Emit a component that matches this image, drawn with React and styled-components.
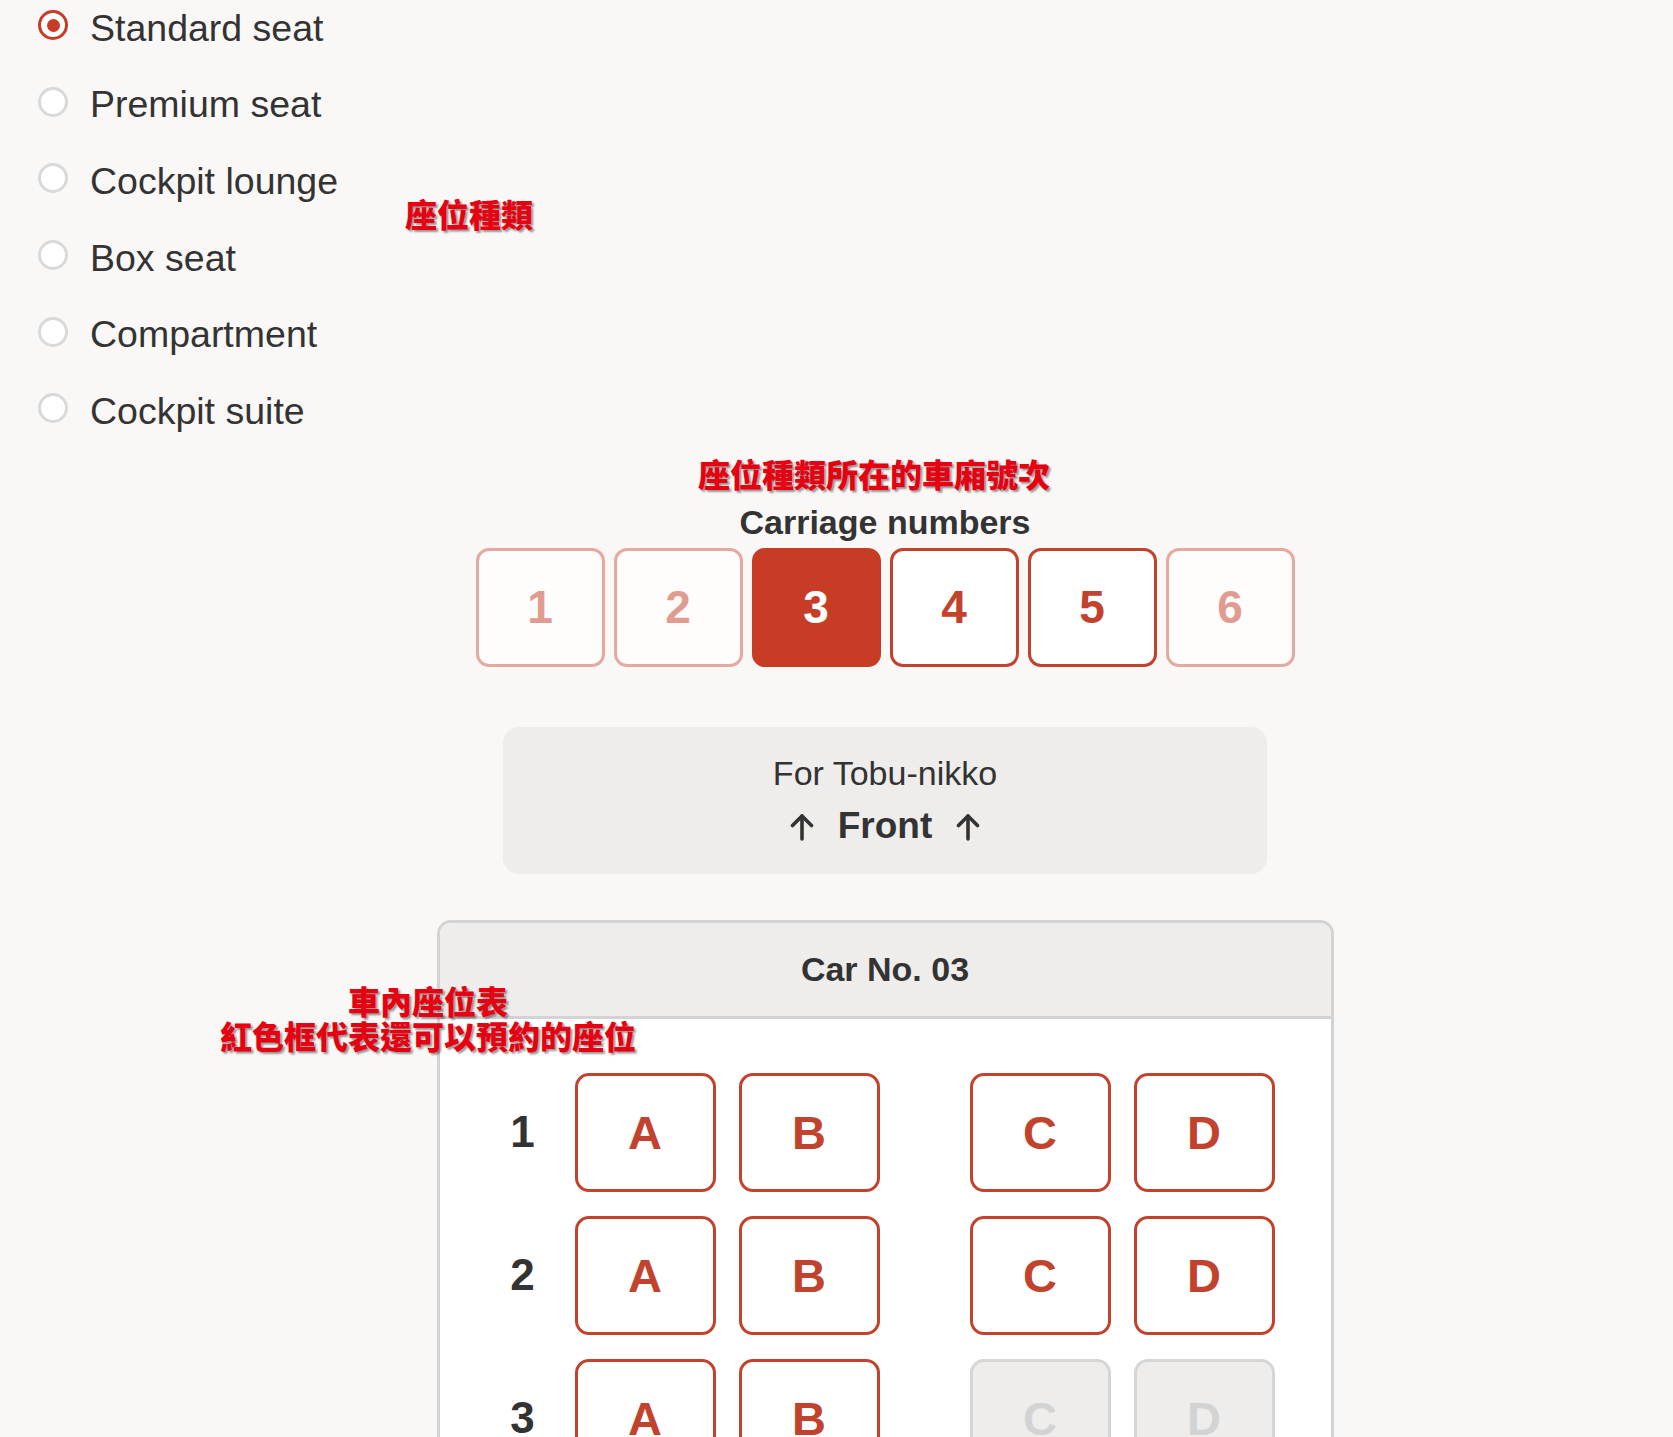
import React, { useState } from "react";
import styled, { createGlobalStyle, css } from "styled-components";

const GlobalStyle = createGlobalStyle`
  * { box-sizing: border-box; }
  html, body {
    margin: 0;
    padding: 0;
    background: #faf8f7;
  }
  body {
    font-family: "Liberation Sans", Arial, sans-serif;
    color: #333;
    overflow: hidden;
  }
`;

const Page = styled.div`
  position: relative;
  width: 1673px;
  min-height: 1437px;
  overflow: hidden;
`;

// seat type radios
const SeatTypeList = styled.ul`
  list-style: none;
  margin: -13px 0 0;
  padding: 0 0 0 38px;
`;

const SeatTypeRow = styled.li`
  height: 76.6px;
  display: flex;
  align-items: center;
  gap: 22px;
  font-size: 37.5px;
  color: #333;
  cursor: pointer;
`;

const SeatTypeLabel = styled.span`
  padding-top: 6px;
`;

const RadioDot = styled.span`
  flex: none;
  width: 30px;
  height: 30px;
  border-radius: 50%;
  border: 3px solid ${(p) => (p.$checked ? "#c63c24" : "#d9d9d9")};
  background: #fff;
  display: flex;
  align-items: center;
  justify-content: center;

  &::after {
    content: "";
    width: 13px;
    height: 13px;
    border-radius: 50%;
    background: ${(p) => (p.$checked ? "#c63c24" : "transparent")};
  }
`;

const Main = styled.main`
  display: flex;
  flex-direction: column;
  align-items: center;
  margin-left: 97px;
  padding-top: 55px;
  padding-bottom: 120px;
`;

const SectionTitle = styled.h2`
  margin: 0;
  font-size: 34px;
  line-height: 40px;
  font-weight: 700;
  color: #333;
`;

const CarriageList = styled.div`
  display: flex;
  gap: 9px;
  margin-top: 6px;
`;

const carriageStates = {
  active: css`
    background: #c63c24;
    border-color: #c63c24;
    color: #fff;
  `,
  open: css`
    background: #fff;
    border-color: #c1432d;
    color: #c1432d;
  `,
  closed: css`
    background: #fffdfc;
    border-color: #e4aaa0;
    color: #e09c90;
  `,
};

const CarriageButton = styled.button`
  width: 129px;
  height: 119px;
  border: 3px solid;
  border-radius: 13px;
  font-family: "Liberation Sans", Arial, sans-serif;
  font-size: 46px;
  font-weight: 700;
  padding: 0;
  cursor: pointer;
  ${(p) => carriageStates[p.$state]}
`;

const DirectionBox = styled.div`
  margin-top: 60px;
  width: 764px;
  height: 147px;
  border-radius: 16px;
  background: #efedeb;
  display: flex;
  flex-direction: column;
  align-items: center;
  justify-content: center;
`;

const Destination = styled.div`
  font-size: 34px;
  line-height: 40px;
  color: #333;
`;

const FrontLabel = styled.div`
  margin-top: 11px;
  display: flex;
  align-items: center;
  gap: 24px;
  font-size: 37px;
  line-height: 44px;
  font-weight: 700;
  color: #333;

  svg {
    display: block;
    margin-top: 2px;
  }
`;

const CarPanel = styled.section`
  margin-top: 46px;
  width: 897px;
  border: 3px solid #d3d3d3;
  border-bottom: none;
  border-radius: 14px 14px 0 0;
  background: #fff;
  overflow: hidden;
`;

const CarHeader = styled.header`
  height: 96px;
  background: #efedeb;
  border-bottom: 3px solid #d3d3d3;
  display: flex;
  align-items: center;
  justify-content: center;
  font-size: 34px;
  font-weight: 700;
  color: #333;
`;

const SeatMap = styled.div`
  display: flex;
  flex-direction: column;
  gap: 24px;
  padding: 54px 0 60px 55px;
`;

const SeatRow = styled.div`
  display: flex;
  align-items: center;
`;

const RowLabel = styled.div`
  width: 56px;
  margin-right: 24px;
  text-align: center;
  font-size: 44px;
  font-weight: 700;
  color: #333;
`;

const SeatPair = styled.div`
  display: flex;
  gap: 23px;

  & + & {
    margin-left: 90px;
  }
`;

const Seat = styled.button`
  width: 141px;
  height: 119px;
  border: 3px solid ${(p) => (p.$taken ? "#d6d6d6" : "#c1432d")};
  border-radius: 14px;
  background: ${(p) => (p.$taken ? "#efedeb" : "#fff")};
  color: ${(p) => (p.$taken ? "#d3d3d3" : "#c1432d")};
  font-family: "Liberation Sans", Arial, sans-serif;
  font-size: 47px;
  font-weight: 700;
  padding: 0;
  cursor: ${(p) => (p.$taken ? "default" : "pointer")};
`;

// red blog annotations laid over the screenshot
const Note = styled.div`
  position: absolute;
  font-family: "Noto Sans CJK TC", "Noto Sans CJK SC", sans-serif;
  font-weight: 900;
  font-size: 32px;
  line-height: 35px;
  color: #e60012;
  text-shadow: 2px 2px 2px rgba(0, 0, 0, 0.4);
  white-space: nowrap;
  text-align: center;
`;

const seatTypes = [
  "Standard seat",
  "Premium seat",
  "Cockpit lounge",
  "Box seat",
  "Compartment",
  "Cockpit suite",
];

const carriages = [
  { no: 1, state: "closed" },
  { no: 2, state: "closed" },
  { no: 3, state: "open" },
  { no: 4, state: "open" },
  { no: 5, state: "open" },
  { no: 6, state: "closed" },
];

const rows = [
  { no: 1, taken: [] },
  { no: 2, taken: [] },
  { no: 3, taken: ["C", "D"] },
  { no: 4, taken: [] },
];

function ArrowUp() {
  return (
    <svg width="24" height="28" viewBox="0 0 24 28" fill="none" stroke="#333" strokeWidth="3.6" strokeLinecap="round" strokeLinejoin="round">
      <path d="M12 26V3" />
      <path d="M2.5 12.5L12 3l9.5 9.5" />
    </svg>
  );
}

export default function App() {
  const [seatType, setSeatType] = useState(0);
  const [car, setCar] = useState(3);

  return (
    <Page>
      <GlobalStyle />
      <SeatTypeList>
        {seatTypes.map((label, i) => (
          <SeatTypeRow key={label} onClick={() => setSeatType(i)}>
            <RadioDot $checked={seatType === i} />
            <SeatTypeLabel>{label}</SeatTypeLabel>
          </SeatTypeRow>
        ))}
      </SeatTypeList>

      <Main>
        <SectionTitle>Carriage numbers</SectionTitle>
        <CarriageList>
          {carriages.map((c) => (
            <CarriageButton
              key={c.no}
              $state={car === c.no ? "active" : c.state}
              onClick={() => c.state !== "closed" && setCar(c.no)}
            >
              {c.no}
            </CarriageButton>
          ))}
        </CarriageList>

        <DirectionBox>
          <Destination>For Tobu-nikko</Destination>
          <FrontLabel>
            <ArrowUp />
            Front
            <ArrowUp />
          </FrontLabel>
        </DirectionBox>

        <CarPanel>
          <CarHeader>Car No. {String(car).padStart(2, "0")}</CarHeader>
          <SeatMap>
            {rows.map((r) => (
              <SeatRow key={r.no}>
                <RowLabel>{r.no}</RowLabel>
                <SeatPair>
                  {["A", "B"].map((s) => (
                    <Seat key={s} $taken={r.taken.includes(s)}>{s}</Seat>
                  ))}
                </SeatPair>
                <SeatPair>
                  {["C", "D"].map((s) => (
                    <Seat key={s} $taken={r.taken.includes(s)}>{s}</Seat>
                  ))}
                </SeatPair>
              </SeatRow>
            ))}
          </SeatMap>
        </CarPanel>
      </Main>

      <Note style={{ left: 405, top: 196 }}>座位種類</Note>
      <Note style={{ left: 698, top: 456 }}>座位種類所在的車廂號次</Note>
      <Note style={{ left: 212, top: 983, width: 432 }}>
        車內座位表
        <br />
        紅色框代表還可以預約的座位
      </Note>
    </Page>
  );
}
